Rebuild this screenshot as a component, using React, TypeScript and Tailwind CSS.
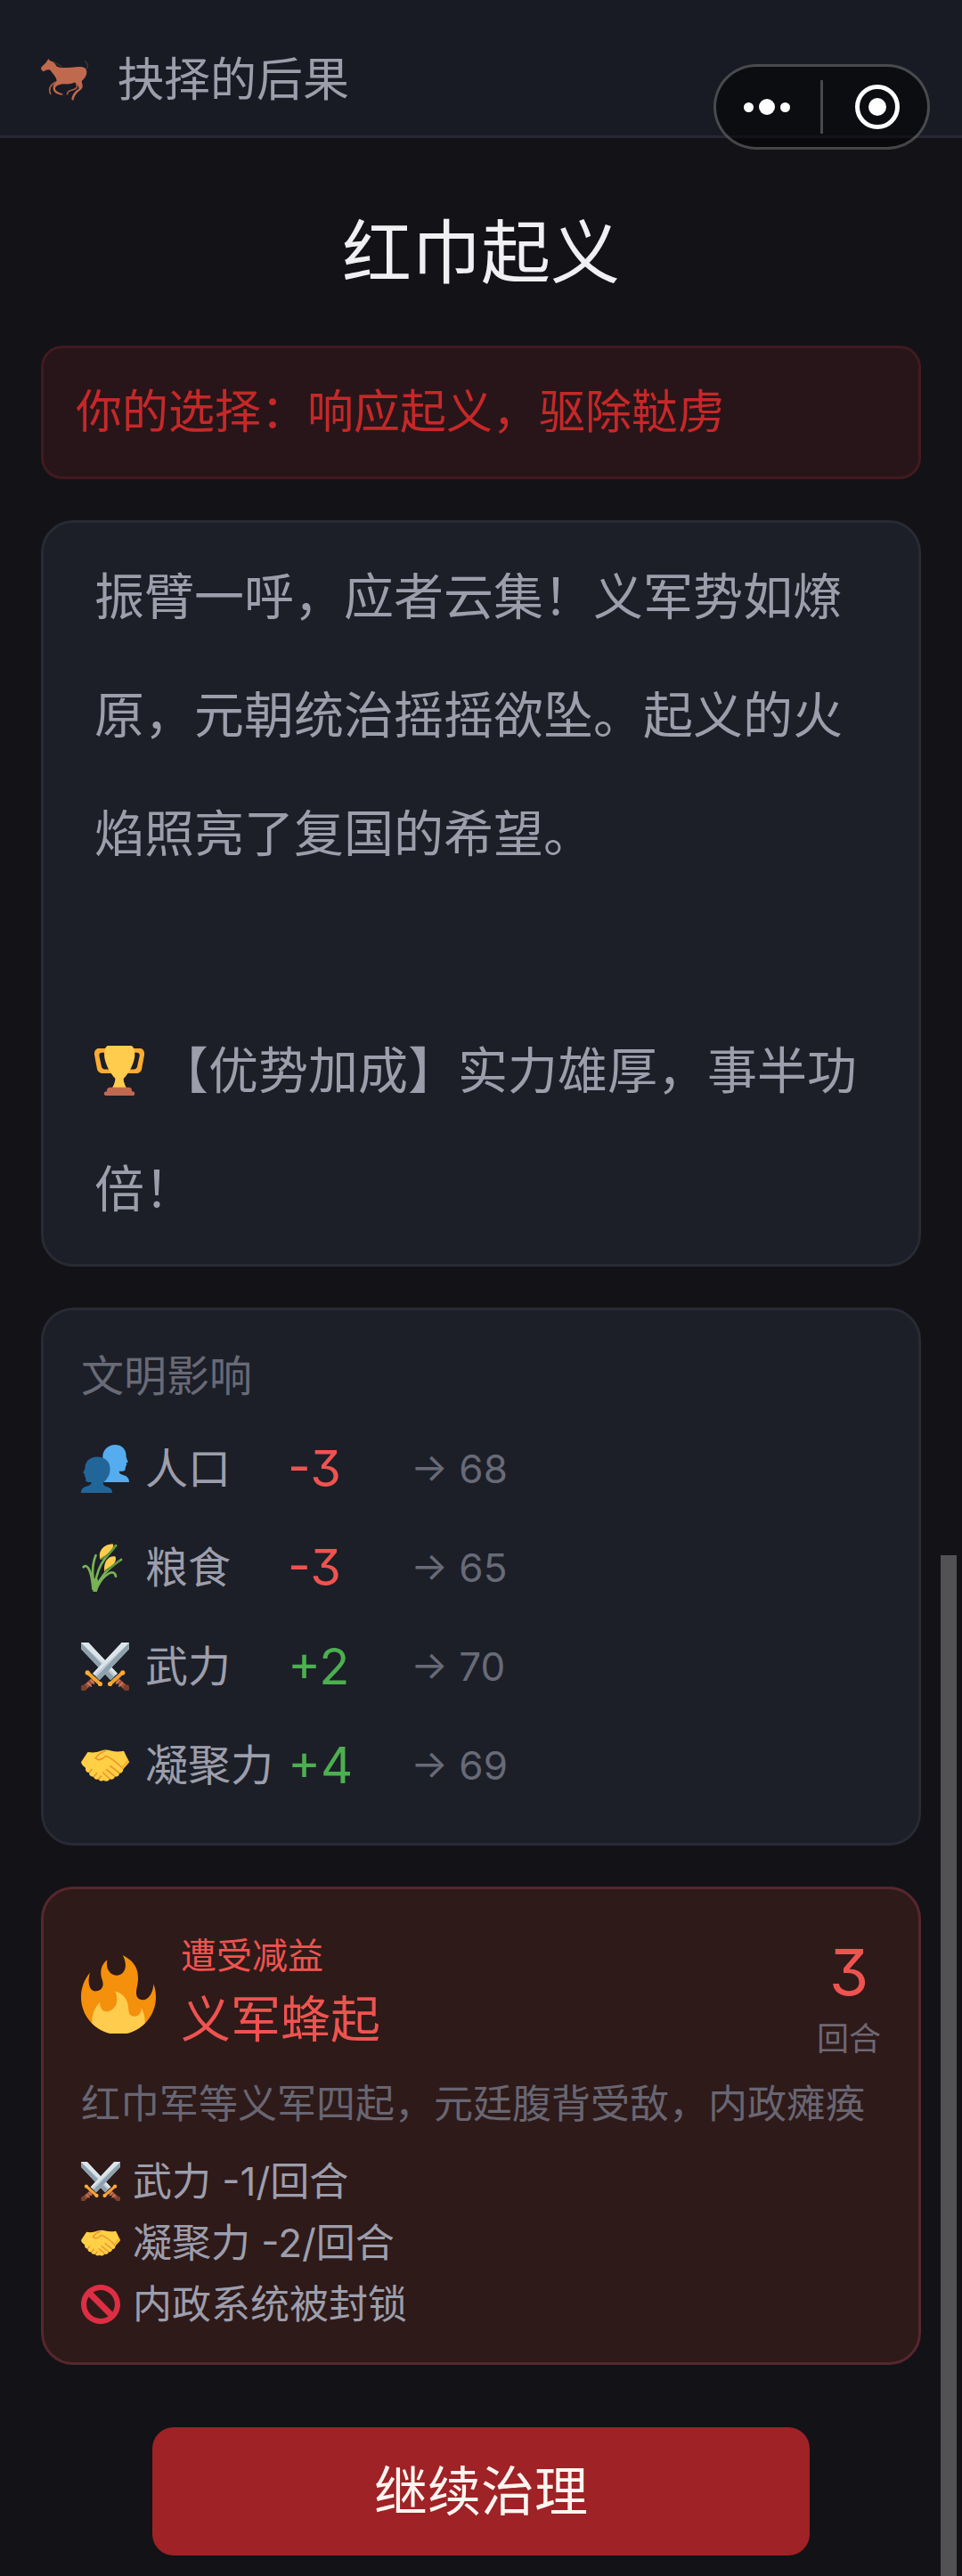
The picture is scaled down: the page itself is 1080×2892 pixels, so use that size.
import type { ReactNode } from 'react'

type IconProps = { className?: string }

function HorseIcon({ className }: IconProps) {
  return (
    <svg viewBox="0 0 52 46" className={className} aria-hidden="true">
      <path d="M47 2c3 2 4.500 5 2.500 9" fill="none" stroke="#3b3234" strokeWidth="1.500" />
      <path d="M13 3c4 1.500 6 4 10 5.500" fill="none" stroke="#3b3234" strokeWidth="1.500" />
      <path
        fill="#C1694F"
        d="M8 0l1.500 2c4 .8 6 3.500 7.500 6.300 4.500 2.200 10 1.200 16 1 6-.3 11.500-1.800 15.300 1.200 2.400 3.500 1 9.500-4.300 13.500.5 3 2.200 6.500-.5 9-3 2.500-6.500 4.500-8.500 12l-2-1c1-6.500 4.500-9.500 8-11.500.2-3-2-5-4.500-7-3 1.500-7 2-11 1.800-4 .2-8.500 1-10 4-1 3 3 5 8 6.500v1.200c-6 0-10.500-3-10.500-7.500 0-3.500 2-5.500 4-8-.5-4-4-7.500-7.500-11.700L6 12l-3.500 1.800L.5 12 0 9.500 5.500 4z"
      />
      <path d="M16 25c-6 3-8 8-5.500 13.500" fill="none" stroke="#A85A45" strokeWidth="1.600" />
      <path d="M38 27c3 4-1 6-5 7-3 .8-5 2-4.500 5" fill="none" stroke="#A85A45" strokeWidth="1.600" />
    </svg>
  )
}

function TrophyIcon({ className }: IconProps) {
  return (
    <svg viewBox="0 0 36 36" className={className} aria-hidden="true">
      <path
        fill="#FFAC33"
        d="M5.123 5h6C12.227 5 13 4.896 13 6V4c0-1.104-.773-2-1.877-2h-8c-2 0-3.583 2.125-3 5 0 0 1.791 9.375 1.917 9.958C2.373 18.500 4.164 20 6.081 20h6.958c1.105 0-.039-1.896-.039-3v-2c0 1.104-.773 2-1.877 2h-4c-1.104 0-1.833-1.042-2-2S3.539 7.667 3.539 7.667C3.206 5.750 4.018 5 5.123 5zm25.812 0h-6C23.831 5 22 4.896 22 6V4c0-1.104 1.831-2 2.935-2h8c2 0 3.584 2.125 3 5 0 0-1.633 9.419-1.771 10-.354 1.500-2.042 3-4 3h-7.146C21.914 20 22 18.104 22 17v-2c0 1.104 1.831 2 2.935 2h4c1.104 0 1.834-1.042 2-2s1.584-7.333 1.584-7.333C32.851 5.750 32.040 5 30.935 5zM20.832 22c0-6.958-2.709 0-2.709 0s-3-6.958-3 0-3.291 10-3.291 10h12.292c-.001 0-3.292-3.042-3.292-10z"
      />
      <path
        fill="#FFCC4D"
        d="M29.123 6.577c0 6.775-6.770 18.423-11 18.423-4.231 0-11-11.649-11-18.423C7.123.802 9.268 0 10.123 0h16c.855 0 3 .802 3 6.577z"
      />
      <path fill="#FFCC4D" d="M15.500 22h5.200c0 4 1.300 6.500 2.300 8H13c1-1.500 2.500-4 2.500-8z" />
      <path
        fill="#C1694F"
        d="M27 33c0 1.104.227 2-.877 2h-16C9.018 35 9 34.104 9 33v-1c0-1.104 1.164-2 2.206-2h13.917c1.042 0 1.877.896 1.877 2v1z"
      />
      <path
        fill="#C1694F"
        d="M29 34.625c0 .760.165 1.375-1.252 1.375H8.498C7.206 36 7 35.385 7 34.625v-.250C7 33.615 7.738 33 8.498 33h19.250c.759 0 1.252.615 1.252 1.375v.250z"
      />
    </svg>
  )
}

function PeopleIcon({ className }: IconProps) {
  return (
    <svg viewBox="0 0 36 36" className={className} aria-hidden="true">
      <path
        fill="#55ACEE"
        d="M25.500 0c-5 0-9.300 3.600-9.300 9 0 4.600 2.200 8.300 4.800 10.300.4 1.500-.2 2.900-1.600 3.500L16 24v4h20c0-3-1.500-4.400-4-5.200-2.600-.8-3.600-1.500-3.400-3 2 .2 4-.2 4.400-1 .3-.7.1-1.800.4-2.600.2-.6.800-.8.700-1.400 0-.5-.4-.8-.2-1.300.9-.1 1.500-.6 1.100-1.300-.5-1.200-1.200-1.800-1.200-3.600C33.800 2.700 30 0 25.500 0z"
      />
      <path
        fill="#226699"
        d="M12 9c5.500 0 9.700 3.300 9.700 9 0 4.600-2.300 8.100-5 10.100-.4 1.900.8 2.800 2.900 3.400 2.600.8 3.700 2 3.700 4.500H0c0-2.800 1.300-4.200 4-4.900 2.700-.7 4-1.500 3.700-3.100-2 .2-3.700-.2-4.100-1-.3-.8 0-1.800-.3-2.600-.2-.6-.8-.7-.7-1.400 0-.5.300-.8.200-1.200-.9-.1-1.500-.6-1.100-1.400.6-1.200 1.300-1.800 1.300-3.400C3 12.300 7 9 12 9z"
      />
    </svg>
  )
}

function GrainIcon({ className }: IconProps) {
  return (
    <svg viewBox="0 0 36 36" className={className} aria-hidden="true">
      <path fill="#FFCC4D" d="M14.500 12C12 6 17 0 24 .3c1 2.700-3 8.700-9.500 11.700z" />
      <path fill="#FFCC4D" d="M17.500 21C16.500 14 20 8.800 25.500 9.500c2 3-2 8.500-8 11.500z" />
      <g fill="none" stroke="#77B255" strokeWidth="1.800" strokeLinecap="round">
        <path d="M10 34C11 24 14 16 18 11L26 1.500" />
        <path d="M1.800 17.500C4 15.500 7.500 17 9 34" />
        <path d="M11 8.800C8 16 8 26 10.500 34" />
        <path d="M11 34C14 26 18 20 30 12" />
        <path d="M11.500 34C16 23 25 18 26 24.500" />
      </g>
      <path fill="#77B255" d="M8.500 26h3.500l1 2-1 8H9z" />
      <path d="M15 11.500C20 9 24 5 26 1.500M18 20.500c5-3 8-5.500 11-8" fill="none" stroke="#5C913B" strokeWidth="1.400" />
    </svg>
  )
}

function SwordHalf() {
  return (
    <>
      <path fill="#BDCCD6" d="M30.500 0H36v4.800L13.800 28.200 8.800 23.200z" />
      <path fill="#8FA1AD" d="M36 0v4.800L13.800 28.200l-2.400-2.400z" />
      <path fill="#DCE5EA" d="M30.500 0H36l-2.300 2.400L10 24.400l-1.200-1.200z" />
      <path d="M9.500 27.500L3 33.500" stroke="#A0533C" strokeWidth="3.600" />
      <path d="M7 28l3 3M4.800 30l3 3" stroke="#D08363" strokeWidth="1" />
      <path d="M5.200 22.800l9.200 8.400" stroke="#F4A22F" strokeWidth="2.600" strokeLinecap="round" />
      <circle cx="4.800" cy="22.600" r="1.700" fill="#FFAC33" />
      <circle cx="14.300" cy="31" r="1.700" fill="#FFAC33" />
      <circle cx="2" cy="34" r="2.300" fill="#7B3F2B" />
    </>
  )
}

function SwordsIcon({ className }: IconProps) {
  return (
    <svg viewBox="0 0 36 36" className={className} aria-hidden="true">
      <g transform="matrix(-1 0 0 1 36 0)">
        <SwordHalf />
      </g>
      <SwordHalf />
    </svg>
  )
}

function HandshakeIcon({ className }: IconProps) {
  return (
    <svg viewBox="0 0 36 36" className={className} aria-hidden="true">
      <path
        fill="#FFCF45"
        d="M0 15.500L5 8c4 .6 6.500.3 9.500-.8 3-1.200 5-1.200 8-.2 3 .8 6 .8 9.500.2l4 8.300c-1.500 2.300-3 3.500-4.500 5.300 0 2.200-1.300 3-2.800 3-.2 2-1.700 2.900-3.400 2.500-.6 2-2.300 2.700-4 1.900-.8 2-3 2-4.300 1-1.500 1-3.500.6-4-1-1.500.7-3.500 0-3.700-1.800-1.800.3-3.500-1-3.200-3C4 23.200 3 22 3.400 19.800 1.500 18.500.5 17.500 0 15.500z"
      />
      <path
        fill="none"
        stroke="#E9962F"
        strokeWidth="1.100"
        strokeLinecap="round"
        strokeLinejoin="round"
        d="M18 7.200c-3 1-5.500 3-7.200 5.300 1.700 2.200 5 1.200 7.700-1.500 3.500 1 8.500 5 12.500 9M22 18.500l6.500 5M19 21l6 5M16.500 23.500l4.500 4M6.500 23l1.500-2M10 26l1.700-2.200M13.500 28l1.300-2"
      />
      <path fill="#F7B52C" d="M31.500 20.500c1-1.500 3-3 4.500-5l-1.200-2.600c-1.500 3-3.300 4.500-4.800 6z" />
    </svg>
  )
}

function FireIcon({ className }: IconProps) {
  return (
    <svg viewBox="1 0 34 36" className={className} aria-hidden="true">
      <path
        fill="#F4900C"
        d="M35 19c0-2.062-.367-4.039-1.040-5.868-.460 5.389-3.333 8.157-6.335 6.868-2.812-1.208-.917-5.917-.777-8.164.236-3.809-.012-8.169-6.931-11.794 2.875 5.500.333 8.917-2.333 9.125-2.958.231-5.667-2.542-4.667-7.042-3.238 2.386-3.332 6.402-2.333 9 1.042 2.708-.042 4.958-2.583 5.208-2.840.280-4.418-3.041-2.963-8.333C2.520 10.965 1 14.805 1 19c0 9.389 7.611 17 17 17s17-7.611 17-17z"
      />
      <path
        fill="#FFCC4D"
        d="M28.394 23.999c.148 3.084-2.561 4.293-4.019 3.709-2.106-.843-1.541-2.291-2.083-5.291s-2.625-5.083-5.708-6c2.250 6.333-1.247 8.667-3.080 9.084-1.872.426-3.753-.001-3.968-4.007C7.352 23.668 6 26.676 6 30c0 .368.023.730.055 1.090C9.125 34.124 13.342 36 18 36s8.875-1.876 11.945-4.910c.032-.360.055-.722.055-1.090 0-2.187-.584-4.236-1.606-6.001z"
      />
    </svg>
  )
}

function BanIcon({ className }: IconProps) {
  return (
    <svg viewBox="0 0 36 36" className={className} aria-hidden="true">
      <path
        fill="#DD2E44"
        d="M18 0C8.059 0 0 8.059 0 18s8.059 18 18 18 18-8.059 18-18S27.941 0 18 0zm13 18c0 2.565-.753 4.950-2.035 6.965L11.036 7.036C13.050 5.753 15.435 5 18 5c7.180 0 13 5.821 13 13zM5 18c0-2.565.753-4.950 2.036-6.964l17.929 17.929C22.950 30.247 20.565 31 18 31c-7.179 0-13-5.820-13-13z"
      />
    </svg>
  )
}

const impacts = [
  { name: '人口', delta: -3, total: 68, Icon: PeopleIcon },
  { name: '粮食', delta: -3, total: 65, Icon: GrainIcon },
  { name: '武力', delta: 2, total: 70, Icon: SwordsIcon },
  { name: '凝聚力', delta: 4, total: 69, Icon: HandshakeIcon },
]

const effects = [
  { text: '武力 -1/回合', Icon: SwordsIcon },
  { text: '凝聚力 -2/回合', Icon: HandshakeIcon },
  { text: '内政系统被封锁', Icon: BanIcon },
]

function Card({ children, className }: { children: ReactNode; className: string }) {
  return <section className={`rounded-[36px] border-3 border-[#282a34] bg-[#1c1f27] ${className}`}>{children}</section>
}

// Mini-program menu that floats over the page
function Capsule() {
  return (
    <div className="absolute top-[72px] right-9 flex h-24 w-[243px] items-center rounded-full border-3 border-white/25 bg-black/50">
      <button type="button" aria-label="更多" className="flex h-full flex-1 items-center justify-center gap-1.5 pr-1">
        <span className="size-[11px] rounded-full bg-white" />
        <span className="size-[18px] rounded-full bg-white" />
        <span className="size-[11px] rounded-full bg-white" />
      </button>
      <span className="h-[60px] w-[3px] bg-white/25" />
      <button type="button" aria-label="关闭" className="flex h-full flex-1 items-center justify-center pl-1">
        <span className="flex size-[50px] items-center justify-center rounded-full border-5 border-white">
          <span className="size-5 rounded-full bg-white" />
        </span>
      </button>
    </div>
  )
}

export default function App() {
  return (
    <div className="relative min-h-screen bg-[#121217] font-['Inter','Noto_Sans_CJK_SC',sans-serif] text-[#9c9eac] [font-feature-settings:'cv09']">
      <header className="flex items-center gap-8 border-b-3 border-[#262733] bg-[#181b23] px-[46px] pt-[54px] pb-[26px]">
        <HorseIcon className="w-[54px]" />
        <span className="text-[52px] leading-[72px]">抉择的后果</span>
      </header>
      <Capsule />

      <main className="flex flex-col gap-[46px] px-[46px] pt-[71px] pb-[22px]">
        <h1 className="text-center text-[78px] leading-[116px] text-[#f0f0f2]">红巾起义</h1>

        <p className="rounded-3xl border-3 border-[#421a20] bg-[#281519] px-9 py-9 text-[52px] leading-[72px] text-[#c62828]">
          你的选择：响应起义，驱除鞑虏
        </p>

        <Card className="px-[57px] py-[17px]">
          <p className="text-[56px] leading-[133px]">振臂一呼，应者云集！义军势如燎原，元朝统治摇摇欲坠。起义的火焰照亮了复国的希望。</p>
          <p className="mt-[133px] text-[56px] leading-[133px]">
            <TrophyIcon className="mr-4 inline-block size-14 align-[-8px]" />
            【优势加成】实力雄厚，事半功倍！
          </p>
        </Card>

        <Card className="px-[42px] pt-[42px] pb-8">
          <h2 className="text-[48px] leading-[64px] text-[#686a77]">文明影响</h2>
          <ul className="mt-4">
            {impacts.map(({ name, delta, total, Icon }) => (
              <li key={name} className="flex h-[111px] items-center">
                <Icon className="size-[54px]" />
                <span className="ml-[18px] w-[160px] text-[48px] leading-[64px]">{name}</span>
                <span className={`w-[138px] text-[56px] leading-[64px] ${delta < 0 ? 'text-[#ef5350]' : 'text-[#4caf50]'}`}>
                  {delta > 0 ? `+${delta}` : delta}
                </span>
                <span className="text-[44px] leading-[64px] text-[#686a77]">→ {total}</span>
              </li>
            ))}
          </ul>
        </Card>

        <section className="rounded-[36px] border-3 border-[#57272c] bg-[#2e1a19] px-[42px] pt-[43px] pb-[31px]">
          <div className="flex items-center">
            <FireIcon className="w-[84px]" />
            <div className="ml-7 flex-1 self-start text-[#ef5350]">
              <p className="text-[40px] leading-[64px]">遭受减益</p>
              <h2 className="text-[56px] leading-[78px]">义军蜂起</h2>
            </div>
            <div className="text-center">
              <p className="text-[72px] leading-[100px] text-[#ef5350]">3</p>
              <p className="text-[36px] leading-[50px] text-[#6f6773]">回合</p>
            </div>
          </div>
          <p className="mt-4 text-[44px] leading-[64px] text-[#686672]">红巾军等义军四起，元廷腹背受敌，内政瘫痪</p>
          <ul className="mt-5">
            {effects.map(({ text, Icon }) => (
              <li key={text} className="flex h-[69px] items-center gap-[14px] text-[44px] leading-[64px]">
                <Icon className="size-11" />
                {text}
              </li>
            ))}
          </ul>
        </section>

        <button
          type="button"
          className="mt-6 w-full max-w-[738px] self-center rounded-3xl bg-[#9e2226] py-8 text-[60px] leading-[80px] text-[#fff5f0]"
        >
          继续治理
        </button>
      </main>

      {/* scroll thumb */}
      <div className="absolute top-[1746px] right-1.5 bottom-0 w-[18px] bg-[#525254]" />
    </div>
  )
}
